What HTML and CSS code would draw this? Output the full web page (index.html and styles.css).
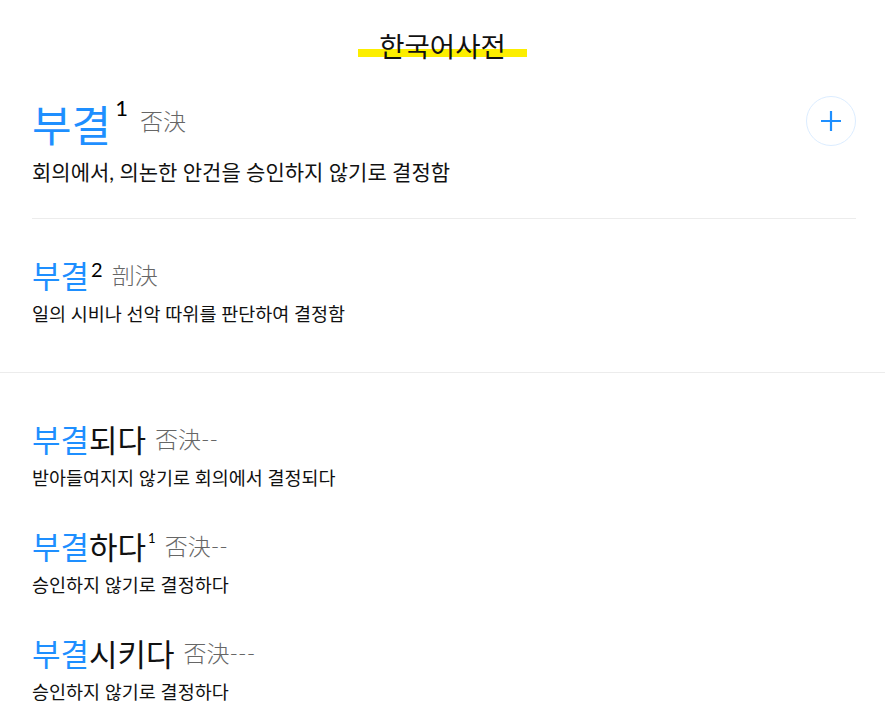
FILE: index.html
```html
<!DOCTYPE html>
<html lang="ko">
<head>
<meta charset="utf-8">
<link rel="stylesheet" href="styles.css">
</head>
<body>
<header class="top">
  <h1 class="brand">한국어사전</h1>
</header>
<section class="group">
  <article class="entry entry-main">
    <div class="entry-head">
      <h2 class="word word-xl"><span class="stem">부결</span><sup class="num">1</sup><span class="hanja">否決</span></h2>
      <button class="add" aria-label="추가">
        <svg width="20" height="20" viewBox="0 0 20 20"><path d="M10 0v20M0 10h20" stroke="#1e8fff" stroke-width="2.2" fill="none"/></svg>
      </button>
    </div>
    <p class="def def-lg">회의에서, 의논한 안건을 승인하지 않기로 결정함</p>
  </article>
  <article class="entry entry-sub">
    <h2 class="word"><span class="stem">부결</span><sup class="num">2</sup><span class="hanja">剖決</span></h2>
    <p class="def">일의 시비나 선악 따위를 판단하여 결정함</p>
  </article>
</section>
<section class="group group-related">
  <article class="entry">
    <h2 class="word"><span class="stem">부결</span>되다<span class="hanja">否決--</span></h2>
    <p class="def">받아들여지지 않기로 회의에서 결정되다</p>
  </article>
  <article class="entry">
    <h2 class="word"><span class="stem">부결</span>하다<sup class="num num-sm">1</sup><span class="hanja">否決--</span></h2>
    <p class="def">승인하지 않기로 결정하다</p>
  </article>
  <article class="entry">
    <h2 class="word"><span class="stem">부결</span>시키다<span class="hanja">否決---</span></h2>
    <p class="def">승인하지 않기로 결정하다</p>
  </article>
</section>
</body>
</html>
```
FILE: styles.css
```css
* { box-sizing: border-box; }
body {
  margin: 0;
  background: #fff;
  color: #111;
  font-family: Lato, "Noto Sans CJK KR", sans-serif;
}
.top {
  display: flex;
  justify-content: center;
  padding-top: 32px;
}
.brand {
  margin: 0;
  font-size: 27.5px;
  line-height: 30px;
  font-weight: 400;
  padding: 0 21px;
  background: linear-gradient(to bottom, transparent 0 17px, #fcee00 17px 25px, transparent 25px);
}
.group {
  padding: 0 29px 0 32px;
}
.group-related {
  border-top: 1px solid #ececec;
  padding-top: 49px;
}
.entry-main {
  padding-top: 40px;
  padding-bottom: 32px;
  border-bottom: 1px solid #ececec;
}
.entry-sub {
  padding-top: 39px;
  padding-bottom: 45px;
}
.entry-head {
  display: flex;
  justify-content: space-between;
  align-items: center;
}
.word {
  margin: 0;
  font-weight: 400;
  font-size: 31px;
  line-height: 36px;
  color: #111;
}
.word-xl {
  font-size: 43px;
  line-height: 48px;
}
.stem { color: #1e8fff; }
.num {
  font-size: 20px;
  line-height: 0;
  vertical-align: 11px;
  margin-left: 2px;
  color: #000;
}
.num-sm { font-size: 13px; vertical-align: 16px; margin-left: 2px; }
.word-xl .num { font-size: 22px; vertical-align: 26px; margin-left: 4px; }
.hanja {
  font-size: 23px;
  font-weight: 300;
  line-height: 0;
  color: #666;
  margin-left: 9px;
  vertical-align: 4px;
}
.word-xl .hanja { margin-left: 12px; vertical-align: 12px; }
.def {
  margin: 7px 0 0;
  font-size: 18.5px;
  line-height: 26px;
}
.def-lg {
  margin-top: 8px;
  font-size: 21px;
  line-height: 28px;
}
.add {
  width: 50px;
  height: 50px;
  border-radius: 50%;
  border: 1px solid #dcedff;
  background: #fff;
  display: flex;
  align-items: center;
  justify-content: center;
  padding: 0;
  margin-top: -10px;
}
.group-related .entry + .entry { margin-top: 38px; }
```
